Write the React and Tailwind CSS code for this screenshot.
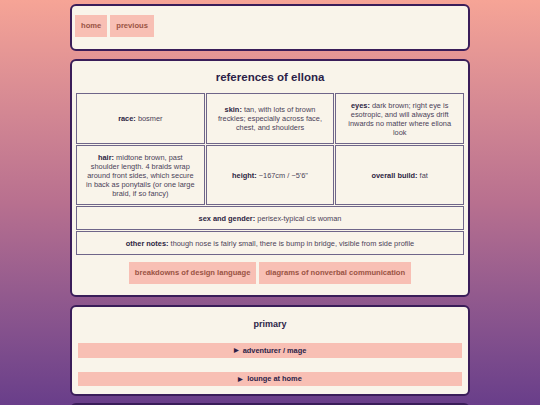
import React from 'react';

const font = { fontFamily: '"Liberation Sans", Arial, sans-serif' };

const Cell = ({ label, children, colSpan }) => (
  <td
    colSpan={colSpan}
    className="border border-[#6f6589] px-[8px] py-[4px] text-center align-middle text-[7.4px] leading-[9px] text-[#4a4258]"
  >
    <b className="font-bold text-[#2d2442]">{label}:</b> {children}
  </td>
);

const Card = ({ className = '', children }) => (
  <div className={`w-[400px] mx-auto rounded-[6px] border-2 border-[#3a1d59] bg-[#f9f4ea] ${className}`}>
    {children}
  </div>
);

const Pill = ({ children }) => (
  <a className="h-[22px] px-[6px] flex items-center bg-[#f8bfb4] text-[7.6px] font-bold text-[#9a5444]">{children}</a>
);

export default function App() {
  return (
    <div
      className="h-[405px] overflow-hidden bg-gradient-to-b from-[#f6a496] via-[#b8708f] to-[#693e8a] pt-[4px]"
      style={font}
    >
      {/* nav */}
      <Card className="h-[47px] px-[3px] pt-[9px]">
        <div className="flex gap-[3px]">
          <Pill>home</Pill>
          <Pill>previous</Pill>
        </div>
      </Card>

      {/* references */}
      <Card className="mt-[8px] h-[238px] px-[3px]">
        <h1 className="text-center text-[11.5px] font-bold text-[#2c1e48] pt-[8px] h-[31px]">references of ellona</h1>
        <table className="w-full table-fixed border-separate border-spacing-[1px]">
          <tbody>
            <tr className="h-[51px]">
              <Cell label="race">bosmer</Cell>
              <Cell label="skin">tan, with lots of brown freckles; especially across face, chest, and shoulders</Cell>
              <Cell label="eyes">dark brown; right eye is esotropic, and will always drift inwards no matter where ellona look</Cell>
            </tr>
            <tr className="h-[60px]">
              <Cell label="hair">midtone brown, past shoulder length. 4 braids wrap around front sides, which secure in back as ponytails (or one large braid, if so fancy)</Cell>
              <Cell label="height">~167cm / ~5'6"</Cell>
              <Cell label="overall build">fat</Cell>
            </tr>
            <tr className="h-[24px]">
              <Cell label="sex and gender" colSpan={3}>perisex-typical cis woman</Cell>
            </tr>
            <tr className="h-[24px]">
              <Cell label="other notes" colSpan={3}>though nose is fairly small, there is bump in bridge, visible from side profile</Cell>
            </tr>
          </tbody>
        </table>
        <div className="mt-[6px] flex justify-center gap-[3px]">
          <Pill>breakdowns of design language</Pill>
          <Pill>diagrams of nonverbal communication</Pill>
        </div>
      </Card>

      {/* primary */}
      <Card className="mt-[8px] h-[91px] px-[6px]">
        <h2 className="text-center text-[9px] font-bold text-[#2c1e48] pt-[11px] h-[36px]">primary</h2>
        <div className="h-[15px] flex items-center justify-center bg-[#f8bfb4] text-[7.4px] font-bold text-[#2c1e48]">
          <span className="mr-[4px] text-[6px]">▶</span>adventurer / mage
        </div>
        <div className="mt-[14px] h-[14px] flex items-center justify-center bg-[#f8bfb4] text-[7.4px] font-bold text-[#2c1e48]">
          <span className="mr-[4px] text-[6px]">▶</span>lounge at home
        </div>
      </Card>

      <Card className="mt-[7px] h-[40px]" />
    </div>
  );
}
